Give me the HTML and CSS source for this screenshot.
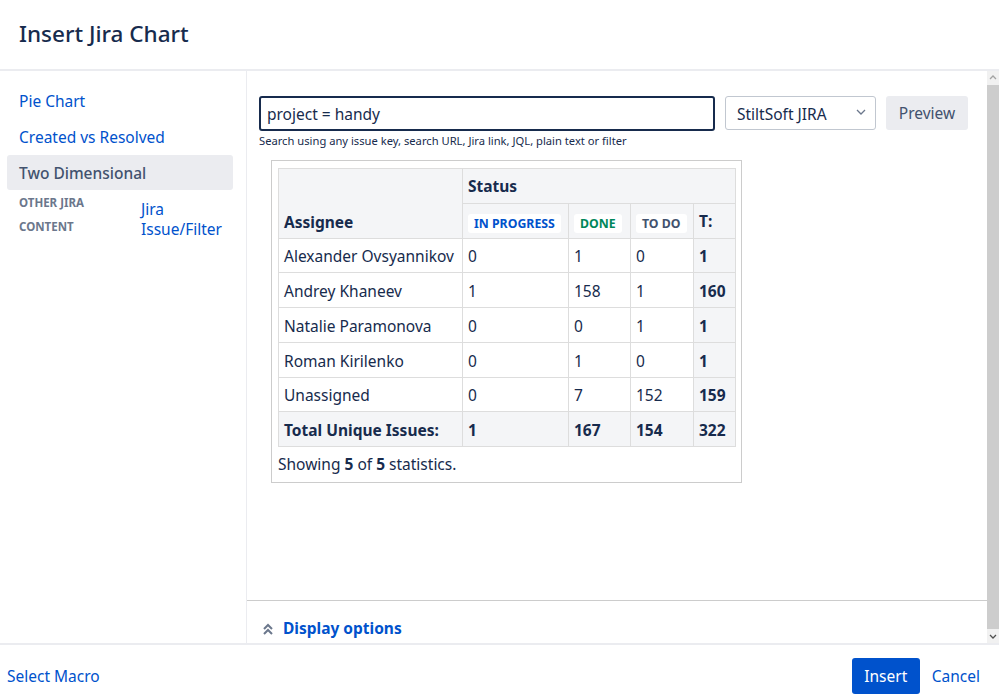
FILE: index.html
```html
<!DOCTYPE html>
<html>
<head>
<meta charset="utf-8">
<link rel="stylesheet" href="styles.css">
</head>
<body>
<div class="dialog">
  <header class="dlg-header"><h1>Insert Jira Chart</h1></header>
  <div class="dlg-main">
    <nav class="sidebar">
      <a class="nav-item">Pie Chart</a>
      <a class="nav-item">Created vs Resolved</a>
      <a class="nav-item selected">Two Dimensional</a>
      <div class="other">
        <div class="other-label">Other Jira<br>content</div>
        <a class="other-link">Jira<br>Issue/Filter</a>
      </div>
    </nav>
    <section class="content">
      <div class="content-body">
        <div class="search-row">
          <div class="search-input">project = handy</div>
          <div class="server-select"><span>StiltSoft JIRA</span>
            <svg class="chev" width="10" height="6" viewBox="0 0 10 6"><path d="M1 1l4 4 4-4" fill="none" stroke="#6b778c" stroke-width="1.3"/></svg>
          </div>
          <button class="preview-btn">Preview</button>
        </div>
        <div class="help">Search using any issue key, search URL, Jira link, JQL, plain text or filter</div>
        <div class="chart-box">
          <table class="grid">
            <colgroup>
              <col class="c1"><col class="c2"><col class="c3"><col class="c4"><col class="c5">
            </colgroup>
            <thead>
              <tr><th rowspan="2" class="assignee">Assignee</th><th colspan="4" class="status">Status</th></tr>
              <tr>
                <th><span class="loz blue">In Progress</span></th>
                <th><span class="loz green">Done</span></th>
                <th><span class="loz grey">To Do</span></th>
                <th class="tcol">T:</th>
              </tr>
            </thead>
            <tbody>
              <tr><td>Alexander Ovsyannikov</td><td>0</td><td>1</td><td>0</td><td class="tot">1</td></tr>
              <tr><td>Andrey Khaneev</td><td>1</td><td>158</td><td>1</td><td class="tot">160</td></tr>
              <tr><td>Natalie Paramonova</td><td>0</td><td>0</td><td>1</td><td class="tot">1</td></tr>
              <tr><td>Roman Kirilenko</td><td>0</td><td>1</td><td>0</td><td class="tot">1</td></tr>
              <tr><td>Unassigned</td><td>0</td><td>7</td><td>152</td><td class="tot">159</td></tr>
              <tr class="total"><td>Total Unique Issues:</td><td>1</td><td>167</td><td>154</td><td>322</td></tr>
            </tbody>
          </table>
          <p class="showing">Showing <b>5</b> of <b>5</b> statistics.</p>
        </div>
      </div>
      <div class="options-bar">
        <svg class="dchev" width="12" height="12" viewBox="0 0 12 12"><path d="M2 6l4-4 4 4M2 11l4-4 4 4" fill="none" stroke="#6b778c" stroke-width="2"/></svg>
        <a class="options-link">Display options</a>
      </div>
    </section>
    <div class="scrollbar">
      <svg width="12" height="14" viewBox="0 0 12 14"><path d="M3 8l3-3 3 3" fill="none" stroke="#a3a3a3" stroke-width="1.3"/></svg>
      <div class="thumb"></div>
      <svg width="12" height="14" viewBox="0 0 12 14"><path d="M3 6l3 3 3-3" fill="none" stroke="#505050" stroke-width="1.3"/></svg>
    </div>
  </div>
  <footer class="dlg-footer">
    <a class="select-macro">Select Macro</a>
    <div class="actions">
      <button class="insert-btn">Insert</button>
      <a class="cancel">Cancel</a>
    </div>
  </footer>
</div>
</body>
</html>
```

FILE: styles.css
```css
* { box-sizing: border-box; }
body {
  margin: 0;
  font-family: "Noto Sans", "Open Sans", sans-serif;
  font-size: 15.5px;
  color: #172b4d;
  background: #fff;
}
.dialog {
  width: 999px;
  height: 700px;
  display: flex;
  flex-direction: column;
}
.dlg-header {
  height: 71px;
  border-bottom: 2px solid #ebecf0;
  display: flex;
  align-items: center;
  padding-left: 19px;
}
.dlg-header h1 {
  margin: 0;
  font-size: 22.5px;
  font-weight: 500;
  color: #172b4d;
  position: relative;
  top: -1px;
}
.dlg-main {
  flex: 1;
  display: flex;
  min-height: 0;
}
.sidebar {
  width: 247px;
  border-right: 1px solid #ebecf0;
  padding-top: 12px;
  display: flex;
  flex-direction: column;
}
.nav-item {
  display: block;
  margin: 0 13px 0 7px;
  height: 36px;
  line-height: 36px;
  padding: 0 12px;
  color: #0052cc;
  border-radius: 3px;
}
.nav-item.selected {
  background: #ebecf0;
  color: #42526e;
  font-weight: 500;
  height: 35px;
  line-height: 37px;
}
.other {
  display: flex;
  padding-left: 19px;
  margin-top: 1px;
}
.other-label {
  width: 122px;
  font-size: 11.5px;
  font-weight: 700;
  color: #6b778c;
  text-transform: uppercase;
  line-height: 24px;
}
.other-link {
  color: #0052cc;
  line-height: 20px;
  margin-top: 8px;
}
.content {
  flex: 1;
  display: flex;
  flex-direction: column;
  min-width: 0;
}
.content-body {
  flex: 1;
  padding: 25px 19px 0 12px;
}
.search-row {
  display: flex;
  gap: 10px;
  height: 35px;
}
.search-input {
  width: 456px;
  height: 35px;
  border: 2px solid #172b4d;
  border-radius: 3px;
  padding: 0 6px;
  line-height: 32px;
  font-size: 15.5px;
  color: #172b4d;
}
.server-select {
  width: 151px;
  height: 34px;
  border: 1px solid #c1c7d0;
  border-radius: 3px;
  display: flex;
  align-items: center;
  justify-content: space-between;
  padding: 0 9px 0 11px;
  font-size: 15.5px;
  color: #172b4d;
}
.server-select span { position: relative; top: 1px; }
.chev { margin-top: -2px; }
.preview-btn {
  width: 82px;
  height: 34px;
  border: none;
  border-radius: 3px;
  background: #ebecf0;
  color: #42526e;
  font-family: inherit;
  font-size: 15.5px;
  padding: 0;
}
.help {
  font-size: 11.2px;
  color: #172b4d;
  margin-top: 2px;
  line-height: 16px;
}
.chart-box {
  margin: 11px 0 0 12px;
  width: 471px;
  border: 1px solid #cccccc;
  padding: 7px 6px 0 6px;
}
.grid {
  border-collapse: collapse;
  table-layout: fixed;
  width: 457px;
}
.c1 { width: 184px; }
.c2 { width: 106px; }
.c3 { width: 62px; }
.c4 { width: 63px; }
.c5 { width: 42px; }
.grid th, .grid td {
  border: 1px solid #dddddd;
  height: 34.75px;
  padding: 0 5px;
  text-align: left;
  white-space: nowrap;
  font-weight: 400;
  color: #172b4d;
}
.grid td { padding-top: 2px; }
.grid th {
  background: #f4f5f7;
  font-weight: 700;
}
.grid th.assignee { vertical-align: bottom; padding-bottom: 5px; }
.loz {
  display: inline-block;
  background: #fff;
  border-radius: 3px;
  font-size: 12.3px;
  font-weight: 700;
  text-transform: uppercase;
  padding: 0 6px;
  line-height: 19px;
  position: relative;
  top: 1px;
}
.loz.blue { color: #0052cc; }
.loz.green { color: #00875a; }
.loz.grey { color: #42526e; }
.grid td.tot { background: #f4f5f7; font-weight: 700; }
.grid tr.total td { background: #f4f5f7; font-weight: 700; }
.showing {
  margin: 0;
  padding: 7px 0 7px 0;
  line-height: 21px;
}
.options-bar {
  height: 43px;
  border-top: 1px solid #cccccc;
  display: flex;
  align-items: flex-start;
  padding: 16px 0 0 15px;
  gap: 9px;
}
.dchev { margin-top: 6px; }
.options-link {
  color: #0052cc;
  font-weight: 700;
  line-height: 22px;
}
.scrollbar {
  width: 12px;
  display: flex;
  flex-direction: column;
  background: #f1f1f1;
}
.scrollbar svg { display: block; flex: none; }
.thumb {
  flex: 1;
  background: #cdcdcd;
}
.dlg-footer {
  height: 57px;
  border-top: 2px solid #ebecf0;
  display: flex;
  align-items: center;
  justify-content: space-between;
  padding: 7px 19px 0 7px;
}
.select-macro { color: #0052cc; }
.actions {
  display: flex;
  align-items: center;
  gap: 12px;
}
.insert-btn {
  width: 68px;
  height: 36px;
  border: none;
  border-radius: 3px;
  background: #0052cc;
  color: #fff;
  font-family: inherit;
  font-size: 15.5px;
  padding: 0;
}
.cancel { color: #0052cc; }
```
